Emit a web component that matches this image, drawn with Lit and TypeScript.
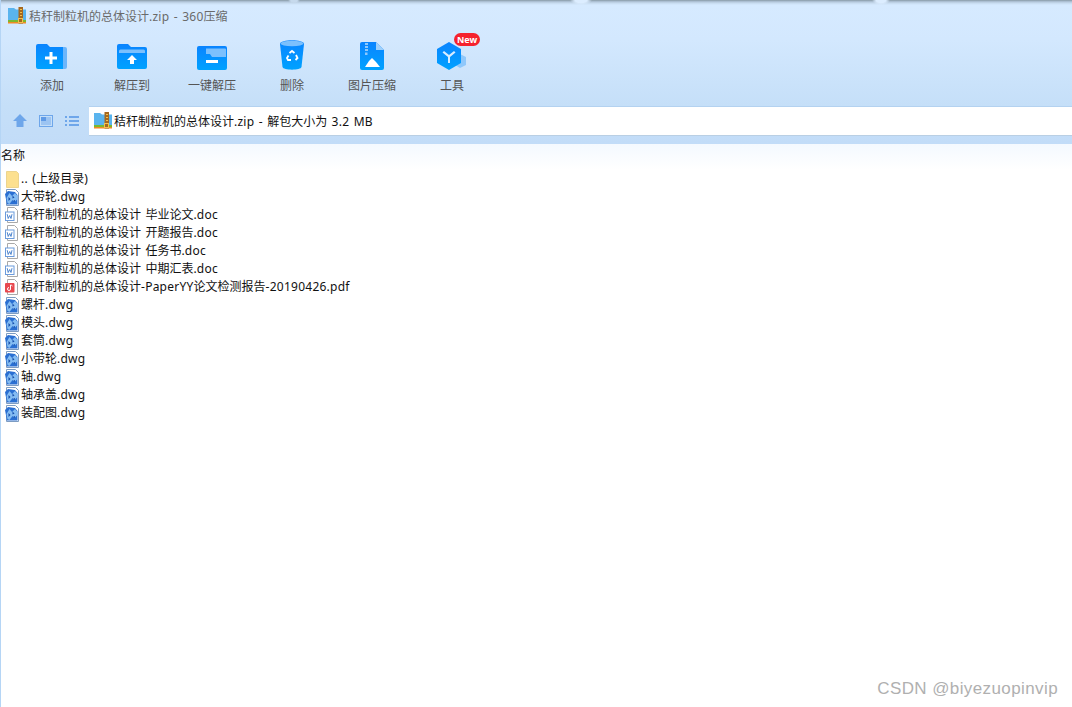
import { LitElement, html, css, svg } from "lit";
import { customElement } from "lit/decorators.js";

const zipIcon = svg`<svg width="18" height="18" viewBox="0 0 18 18"><path d="M0 1h6l2 1.500h10V16H0z" fill="#5ab4ee"/><rect x="0" y="13" width="18" height="2" fill="#7cb82f"/><rect x="0" y="15" width="18" height="1.500" fill="#f08a24"/><rect x="10.500" y="0" width="4.500" height="16.500" fill="#a5681f"/><rect x="12" y="2" width="2" height="1" fill="#f3c14b"/><rect x="12" y="5" width="2" height="1" fill="#f3c14b"/><rect x="12" y="8" width="2" height="1" fill="#f3c14b"/><rect x="10.500" y="11.500" width="4" height="4" fill="none" stroke="#f3c14b"/></svg>`;

const folder = svg`<svg width="16" height="18" viewBox="0 0 16 18"><path d="M2.500 1.500h10l2 2V17.500h-12z" fill="#fce08f" stroke="#ecd48e"/></svg>`;
const dwg = svg`<svg width="16" height="17" viewBox="0 0 16 17"><path d="M2.500.5h9l3 3v13h-12z" fill="#fff" stroke="#7d9cc2"/><path d="M1 5l3-3 7 1 2.500 3v9.500H3z" fill="#2a6fd2"/><path d="M2.500 9l3-5 2.500 3 3-3 2.500 3v3l-3 3-2-2-3 4-2-1z" fill="#84bcf2"/><path d="M4.500 8l2 2-2 2zM8.500 6.500l2 2-2 1zM9 12l2-1v2z" fill="#114aa8"/></svg>`;
const doc = svg`<svg width="16" height="16" viewBox="0 0 16 16"><path d="M3.500.5h7l3 3v12h-10z" fill="#fff" stroke="#a9a9a9"/><rect x="1.500" y="5" width="8.500" height="8.500" fill="#fff" stroke="#6b9bdc"/><path d="M3.200 7.200l1 4.300 1.500-3 1.300 3 1-4.300" fill="none" stroke="#3c78c8" stroke-width=".9"/></svg>`;
const pdf = svg`<svg width="16" height="16" viewBox="0 0 16 16"><path d="M3.500.5h7l3 3v12h-10z" fill="#fff" stroke="#a9a9a9"/><rect x="1" y="4" width="9.500" height="9.500" rx="1" fill="#e8484f"/><path d="M6.500 6v4a1.500 1.500 0 1 1-1.500-1.500M6.500 6c1 0 1.500.5 2 1" fill="none" stroke="#fff" stroke-width="1"/></svg>`;

const tools = [
  { label: "添加", icon: svg`<svg width="32" height="26" viewBox="0 0 32 26"><defs><linearGradient id="g1" x1="0" y1="0" x2="0" y2="1"><stop offset="0" stop-color="#0a84ff"/><stop offset="1" stop-color="#00a2ff"/></linearGradient></defs><path d="M26 3h3a2 2 0 0 1 2 2v18a2 2 0 0 1-2 2h-3z" fill="#6cb6fb"/><path d="M2 0h9l3 3h13v22H2a2 2 0 0 1-2-2V2a2 2 0 0 1 2-2z" fill="url(#g1)"/><path d="M13.500 8h3v4.500H21v3h-4.500V20h-3v-4.500H9v-3h4.500z" fill="#fff"/></svg>` },
  { label: "解压到", icon: svg`<svg width="30" height="26" viewBox="0 0 30 26"><path d="M2 0h9l3 3h14a2 2 0 0 1 2 2v18a2 2 0 0 1-2 2H2a2 2 0 0 1-2-2V2a2 2 0 0 1 2-2z" fill="url(#g1)"/><path d="M2 9V7a1.500 1.500 0 0 1 1.500-1.500h23A1.500 1.500 0 0 1 28 7v2z" fill="#7cc0fd"/><path d="M15 11l5 5h-3v4h-4v-4h-3z" fill="#fff"/></svg>` },
  { label: "一键解压", icon: svg`<svg width="30" height="24" viewBox="0 0 30 24"><rect width="30" height="24" rx="2" fill="url(#g1)"/><path d="M9 2.500h19a1 1 0 0 1 1 1V11H15l-2-3H9z" fill="#7cc0fd"/><rect x="9" y="14" width="12" height="3" fill="#fff"/></svg>` },
  { label: "删除", icon: svg`<svg width="24" height="30" viewBox="0 0 24 30"><path d="M0 4c0-5 24-5 24 0l-2.500 23c-.5 3.500-18.500 3.500-19 0z" fill="url(#g1)"/><ellipse cx="12" cy="3.500" rx="11.500" ry="2.800" fill="#7cc0fd"/><g fill="none" stroke="#fff" stroke-width="1.800"><path d="M9.500 13l2.500-2 2.500 2"/><path d="M16 15l1.500 3-2 2"/><path d="M11 20H8l-1-2 1.500-2.500"/></g></svg>` },
  { label: "图片压缩", icon: svg`<svg width="24" height="28" viewBox="0 0 24 28"><path d="M2 0h14l8 8v18a2 2 0 0 1-2 2H2a2 2 0 0 1-2-2V2a2 2 0 0 1 2-2z" fill="url(#g1)"/><path d="M16 0l8 8h-8z" fill="#9fd0fb"/><path d="M5 1h3v2H5zM5 4h3v2H5zM5 7h3v2H5zM5 10.500h2.500v2.500H5z" fill="#8cc8fd"/><path d="M5 25l4-6 3-3 4 4 4 5z" fill="#fff"/></svg>` },
  { label: "工具", icon: svg`<svg width="30" height="28" viewBox="0 0 30 28"><path d="M23 12l6 3v8l-6 3-5-3z" fill="#8fc8fb"/><path d="M12 0l12 7v14l-12 7-12-7V7z" fill="url(#g1)"/><path d="M7 9l5 4 5-4 1.500 1.500L13 15v6h-2v-6L5.500 10.500z" fill="#d8ecff"/></svg>`, badge: true },
];

const files: [string, "folder" | "dwg" | "doc" | "pdf"][] = [
  [".. (上级目录)", "folder"],
  ["大带轮.dwg", "dwg"],
  ["秸秆制粒机的总体设计 毕业论文.doc", "doc"],
  ["秸秆制粒机的总体设计 开题报告.doc", "doc"],
  ["秸秆制粒机的总体设计 任务书.doc", "doc"],
  ["秸秆制粒机的总体设计 中期汇表.doc", "doc"],
  ["秸秆制粒机的总体设计-PaperYY论文检测报告-20190426.pdf", "pdf"],
  ["螺杆.dwg", "dwg"],
  ["模头.dwg", "dwg"],
  ["套筒.dwg", "dwg"],
  ["小带轮.dwg", "dwg"],
  ["轴.dwg", "dwg"],
  ["轴承盖.dwg", "dwg"],
  ["装配图.dwg", "dwg"],
];
const icons = { folder, dwg, doc, pdf };

/** Latin runs are set slightly wider than the CJK text around them. */
const spaced = (text: string) =>
  text.split(/([\x00-\x7f]+)/).map((part, i) => (i % 2 ? html`<span class="lat">${part}</span>` : part));

@customElement("app-root")
export class AppRoot extends LitElement {
  static styles = css`
    :host { display: block; position: relative; width: 1072px; height: 707px; overflow: hidden; background: #fff; box-sizing: border-box; border-left: 1px solid #b5d5f5;
      font-family: "Noto Sans", "Noto Sans CJK SC", sans-serif; font-size: 12px; color: #111; }
    .lat { letter-spacing: .25px; word-spacing: 1px; }
    .top { height: 144px; display: flex; flex-direction: column; box-sizing: border-box; padding-top: 2px;
      background:
        radial-gradient(11px 5px at 580px 0, #dcedff 55%, transparent),
        radial-gradient(9px 5px at 880px 0, #dcedff 55%, transparent),
        radial-gradient(6px 4px at 293px 0, #c6d9ec 55%, transparent),
        linear-gradient(#84969f 0, #a3b6c9 1px, #c6daee 3px, #d6eaff 5px, #d3e8fe 40px, #c5dff8 106px, #c2dcf8 144px); }
    .title { height: 28px; display: flex; align-items: center; gap: 3px; padding-left: 7px; color: #6a6a6a; font-size: 12px; }
    .title svg { flex: none; }
    .toolbar { height: 76px; display: flex; padding-left: 11px; }
    .tool { width: 80px; display: flex; flex-direction: column; align-items: center; position: relative; color: #555; }
    .ic { height: 36px; margin-top: 4px; display: flex; align-items: flex-end; justify-content: center; position: relative; }
    .lab { margin-top: 8px; line-height: 16px; }
    .badge { position: absolute; left: 17px; top: -1px; width: 26px; height: 13px; border-radius: 7px; background: #f5222d; color: #fff; font-size: 9px; line-height: 13px; text-align: center; font-weight: bold; }
    .addr { height: 30px; display: flex; }
    .nav { width: 88px; display: flex; align-items: center; gap: 12px; padding-left: 12px; box-sizing: border-box; }
    .bar { flex: 1; background: #fff; border-bottom: 1px solid #b9cfe4; border-top: 1px solid #b4d2f0; display: flex; align-items: center; gap: 2px; padding-left: 5px; font-size: 12px; color: #111; }
    .head { height: 26px; line-height: 23px; background: linear-gradient(#f4f9ff, #fff); color: #111; }
    .list { display: flex; flex-direction: column; }
    .row { height: 18px; display: flex; align-items: center; gap: 1px; padding-left: 3px; line-height: 18px; color: #111; }
    .row svg { flex: none; }
    .mark { position: absolute; right: 14px; bottom: 8px; font-family: "Liberation Sans", sans-serif; font-size: 17px; color: #b0b0b0; letter-spacing: .4px; }
  `;
  render() {
    return html`
      <div class="top">
        <div class="title">${zipIcon}<span>${spaced("秸秆制粒机的总体设计.zip - 360压缩")}</span></div>
        <div class="toolbar">
          ${tools.map((t) => html`<div class="tool"><div class="ic">${t.icon}${t.badge ? html`<span class="badge">New</span>` : ""}</div><div class="lab">${t.label}</div></div>`)}
        </div>
        <div class="addr">
          <div class="nav">
            <svg width="14" height="14" viewBox="0 0 14 14"><path d="M7 0l7 7h-3.500v6h-7V7H0z" fill="#6ea6ea"/></svg>
            <svg width="14" height="12" viewBox="0 0 14 12"><rect x=".5" y=".5" width="13" height="11" fill="none" stroke="#6ea6ea"/><rect x="2" y="2" width="10" height="8" fill="#9cc4f2"/><rect x="2" y="2" width="5" height="4" fill="#5f9ae6"/></svg>
            <svg width="14" height="10" viewBox="0 0 14 10"><path d="M0 0h2v2H0zM4 0h10v2H4zM0 4h2v2H0zM4 4h10v2H4zM0 8h2v2H0zM4 8h10v2H4z" fill="#6ea6ea"/></svg>
          </div>
          <div class="bar">${zipIcon}<span>${spaced("秸秆制粒机的总体设计.zip - 解包大小为 3.2 MB")}</span></div>
        </div>
      </div>
      <div class="head">名称</div>
      <div class="list">
        ${files.map(([n, k]) => html`<div class="row">${icons[k]}<span>${spaced(n)}</span></div>`)}
      </div>
      <div class="mark">CSDN @biyezuopinvip</div>
    `;
  }
}
